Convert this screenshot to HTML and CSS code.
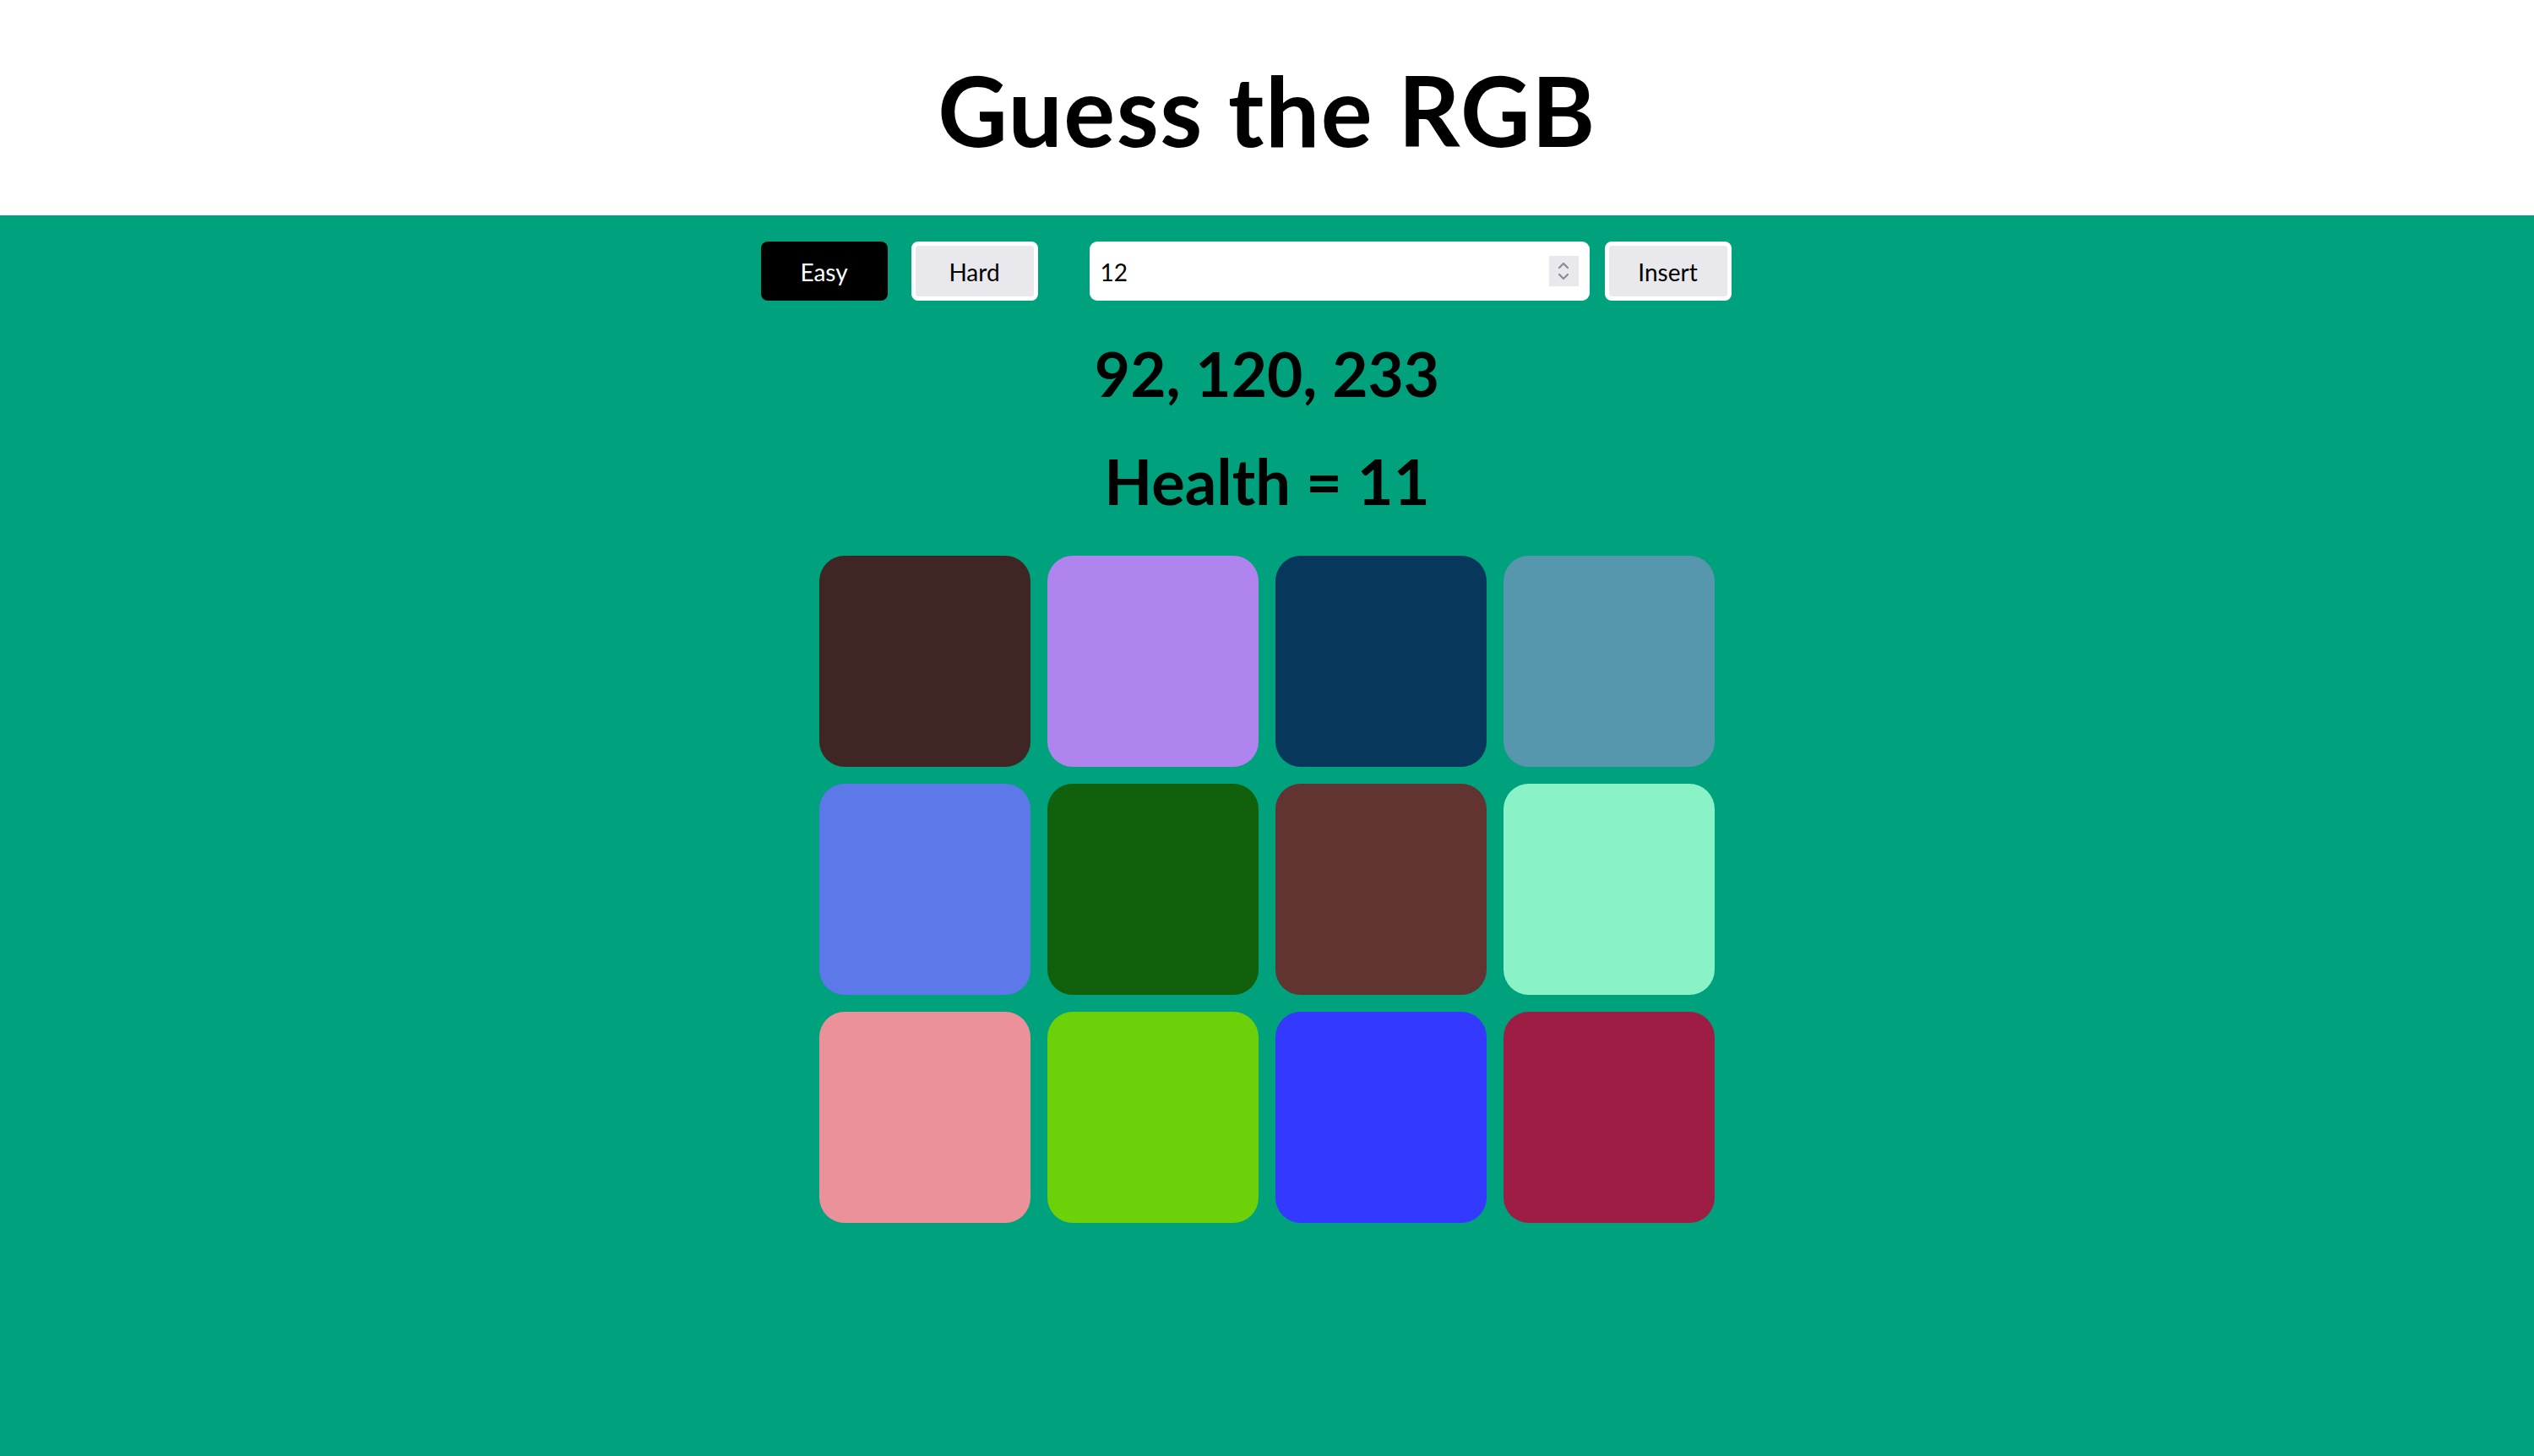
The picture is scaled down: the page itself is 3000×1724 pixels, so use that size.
FILE: index.html
```html
<!DOCTYPE html>
<html lang="en">
<head>
<meta charset="utf-8">
<title>Guess the RGB</title>
<link rel="stylesheet" href="styles.css">
</head>
<body>
<header class="top">
  <h1 class="title">Guess the RGB</h1>
</header>
<main class="game">
  <div class="controls">
    <button class="btn btn-active">Easy</button>
    <button class="btn btn-light">Hard</button>
    <div class="num-input">
      <span class="num-value">12</span>
      <span class="spinner">
        <svg width="14" height="26" viewBox="0 0 14 26" aria-hidden="true">
          <path d="M2 9 L7 4 L12 9" fill="none" stroke="#8c8a93" stroke-width="2.2" stroke-linecap="round" stroke-linejoin="round"/>
          <path d="M2 17 L7 22 L12 17" fill="none" stroke="#8c8a93" stroke-width="2.2" stroke-linecap="round" stroke-linejoin="round"/>
        </svg>
      </span>
    </div>
    <button class="btn btn-light btn-insert">Insert</button>
  </div>
  <h2 class="rgb">92, 120, 233</h2>
  <h2 class="health">Health = 11</h2>
  <div class="grid">
    <div class="tile" style="background:#3f2523"></div>
    <div class="tile" style="background:#b084ef"></div>
    <div class="tile" style="background:#07385c"></div>
    <div class="tile" style="background:#5797ae"></div>
    <div class="tile" style="background:#5c78e9"></div>
    <div class="tile" style="background:#10600c"></div>
    <div class="tile" style="background:#613331"></div>
    <div class="tile" style="background:#8af2c7"></div>
    <div class="tile" style="background:#ea9199"></div>
    <div class="tile" style="background:#6dd10a"></div>
    <div class="tile" style="background:#3339ff"></div>
    <div class="tile" style="background:#9e1d45"></div>
  </div>
</main>
</body>
</html>
```
FILE: styles.css
```css
html, body {
  margin: 0;
  padding: 0;
}
body {
  font-family: Lato, "Noto Sans", sans-serif;
  color: #000;
  background: #00a17d;
  min-height: 1724px;
}
.top {
  background: #fff;
  height: 255px;
  display: flex;
  align-items: center;
  justify-content: center;
  padding-top: 4px;
  box-sizing: border-box;
}
.title {
  margin: 0;
  font-size: 114px;
  line-height: 130px;
  font-weight: 700;
  letter-spacing: 1.5px;
}
.game {
  background: #00a17d;
  display: flex;
  flex-direction: column;
  align-items: center;
  padding-top: 31px;
  padding-bottom: 40px;
}
.controls {
  display: flex;
  align-items: center;
  height: 70px;
  margin-right: 50px;
}
.btn {
  font-family: Lato, "Noto Sans", sans-serif;
  font-size: 28px;
  width: 150px;
  height: 70px;
  border-radius: 8px;
  box-sizing: border-box;
  cursor: pointer;
  padding: 2px 0 0 0;
}
.btn-active {
  background: #000;
  color: #fff;
  border: none;
  margin-right: 28px;
}
.btn-light {
  background: #e9e8ed;
  color: #000;
  border: 5px solid #fff;
}
.num-input {
  margin-left: 61px;
  width: 592px;
  height: 70px;
  background: #fff;
  border-radius: 9px;
  display: flex;
  align-items: center;
  padding: 2px 13px 0 13px;
  box-sizing: border-box;
}
.num-value {
  font-size: 28px;
}
.spinner {
  margin-left: auto;
  margin-top: -2px;
  width: 35px;
  height: 36px;
  background: #e9e8ed;
  display: flex;
  align-items: center;
  justify-content: center;
}
.btn-insert {
  margin-left: 18px;
}
.rgb, .health {
  margin: 0;
  line-height: 80px;
  font-weight: 700;
}
.rgb {
  font-size: 73px;
  margin-top: 46px;
}
.health {
  font-size: 74px;
  margin-top: 48px;
}
.grid {
  margin-top: 48px;
  display: grid;
  grid-template-columns: repeat(4, 250px);
  grid-auto-rows: 250px;
  gap: 20px;
}
.tile {
  border-radius: 30px;
}
```
